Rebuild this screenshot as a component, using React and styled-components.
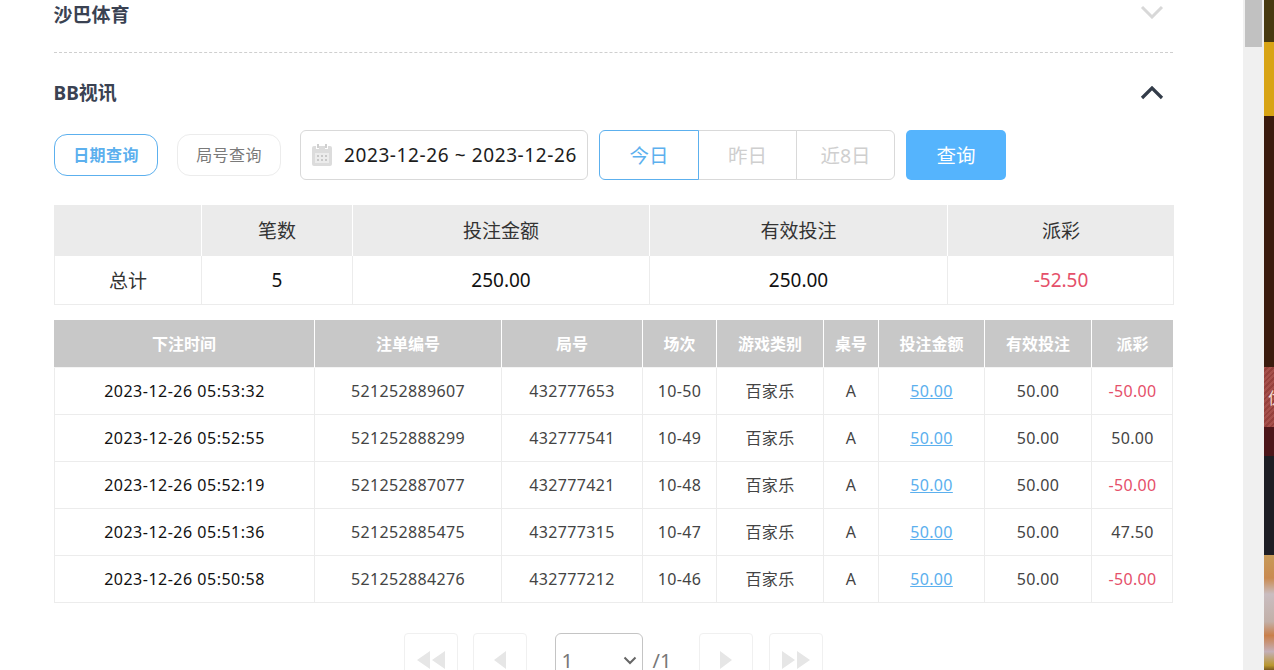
import styled, { createGlobalStyle } from "styled-components";

const GlobalStyle = createGlobalStyle`
  html, body {
    margin: 0;
    height: 100%;
    overflow: hidden;
    background: #fff;
  }
  body {
    font-family: "Noto Sans", "Noto Sans CJK SC", sans-serif;
    color: #303030;
  }
  * {
    box-sizing: border-box;
  }
`;

const summaryCols = "147px 151px 297px 298px 227px";
const detailCols = "260px 187px 141px 74px 107px 55px 106px 107px 82px";

const rows = [
  ["2023-12-26 05:53:32", "521252889607", "432777653", "10-50", "-50.00"],
  ["2023-12-26 05:52:55", "521252888299", "432777541", "10-49", "50.00"],
  ["2023-12-26 05:52:19", "521252887077", "432777421", "10-48", "-50.00"],
  ["2023-12-26 05:51:36", "521252885475", "432777315", "10-47", "47.50"],
  ["2023-12-26 05:50:58", "521252884276", "432777212", "10-46", "-50.00"],
];

const Page = styled.div`
  display: flex;
  width: 1274px;
  height: 670px;
  overflow: hidden;
`;

const Main = styled.main`
  width: 1243px;
  height: 670px;
  padding: 0 70px 0 54px;
  overflow: hidden;
`;

const SectionHead = styled.div`
  display: flex;
  align-items: center;
  justify-content: space-between;
  height: ${(p) => p.$height}px;
  padding-bottom: ${(p) => p.$pb || 0}px;
  border-bottom: ${(p) => (p.$dashed ? "1px dashed #cfcfcf" : "none")};
  margin-bottom: ${(p) => p.$mb || 0}px;
`;

const SectionTitle = styled.h3`
  margin: 0 0 0 -0.5px;
  font-size: 19px;
  font-weight: 700;
  line-height: 28px;
  color: #3a4252;
`;

const Chevron = styled.svg`
  width: 24px;
  height: 14px;
  margin-right: 9px;
  margin-bottom: ${(p) => p.$lift || 0}px;
  fill: none;
  stroke: ${(p) => p.$color};
  stroke-width: ${(p) => p.$weight};
`;

const Toolbar = styled.div`
  display: flex;
  align-items: center;
  height: 50px;
  margin-bottom: 25px;
`;

const Pill = styled.button`
  width: 104px;
  height: 42px;
  margin-right: 19px;
  padding: 0 0 2px;
  font: inherit;
  font-size: 16px;
  letter-spacing: 0.4px;
  font-weight: ${(p) => (p.$active ? 700 : 400)};
  color: ${(p) => (p.$active ? "#5cb0ee" : "#7a7a7a")};
  background: #fff;
  border: 1px solid ${(p) => (p.$active ? "#5cb0ee" : "#ececec")};
  border-radius: 13px;
`;

const DateBox = styled.div`
  display: flex;
  align-items: center;
  width: 288px;
  height: 50px;
  margin-right: 11px;
  padding-left: 10px;
  font-size: 19px;
  letter-spacing: 0.6px;
  color: #1c1c1c;
  white-space: nowrap;
  border: 1px solid #d9d9d9;
  border-radius: 6px;
`;

const CalendarIcon = styled.svg`
  width: 22px;
  height: 24px;
  margin-right: 11px;
  flex: none;
`;

const RangeGroup = styled.div`
  display: flex;
  height: 50px;
  margin-right: 11px;
`;

const RangeButton = styled.button`
  width: ${(p) => (p.$first ? 100 : 99)}px;
  height: 50px;
  padding: 0 0 2px;
  margin-left: ${(p) => (p.$first ? 0 : "-1px")};
  font: inherit;
  font-size: 19.5px;
  color: ${(p) => (p.$active ? "#5cb0ee" : "#cfcfcf")};
  background: #fff;
  border: 1px solid ${(p) => (p.$active ? "#5cb0ee" : "#d9d9d9")};
  border-radius: ${(p) => p.$radius};
  position: relative;
  z-index: ${(p) => (p.$active ? 1 : 0)};
`;

const SearchButton = styled.button`
  width: 100px;
  height: 50px;
  padding: 0 0 2px;
  font: inherit;
  font-size: 19.5px;
  color: #fff;
  background: #55b4fd;
  border: none;
  border-radius: 5px;
`;

const SummaryTable = styled.div`
  display: grid;
  grid-template-columns: ${summaryCols};
  width: 1120px;
  margin-bottom: 15px;
  border-bottom: 1px solid #ececec;
  border-right: 1px solid #ececec;
`;

const SummaryHead = styled.div`
  display: flex;
  align-items: center;
  justify-content: center;
  height: 51px;
  padding-bottom: 1px;
  font-size: 19px;
  color: #333;
  background: #ebebeb;
  border-left: ${(p) => (p.$first ? "none" : "1px solid #fff")};
`;

const SummaryCell = styled.div`
  display: flex;
  align-items: center;
  justify-content: center;
  height: 48px;
  padding-bottom: 1px;
  font-size: 19px;
  color: ${(p) => (p.$loss ? "#e5506a" : p.$label ? "#333" : "#111")};
  border-left: 1px solid #ececec;
`;

const DetailTable = styled.div`
  display: grid;
  grid-template-columns: ${detailCols};
  width: 1119px;
  margin-bottom: 30px;
  border-right: 1px solid #ececec;
`;

const DetailHead = styled.div`
  display: flex;
  align-items: center;
  justify-content: center;
  height: 48px;
  padding-bottom: 1px;
  font-size: 16px;
  font-weight: 700;
  color: #fff;
  background: #c8c8c8;
  border-left: ${(p) => (p.$first ? "none" : "1px solid #fff")};
  border-bottom: 1px solid #f4f4f4;
`;

const DetailCell = styled.div`
  display: flex;
  align-items: center;
  justify-content: center;
  height: 47px;
  padding-bottom: ${(p) => (p.$cjk ? 2 : 0)}px;
  font-size: 16px;
  letter-spacing: ${(p) => (p.$dark ? 0.5 : 0.35)}px;
  color: ${(p) => (p.$loss ? "#e5506a" : p.$dark ? "#111" : "#444")};
  border-left: 1px solid #ececec;
  border-bottom: 1px solid #ececec;
`;

const AmountLink = styled.a`
  color: #5cb0ee;
  text-decoration: underline;
`;

const Pager = styled.div`
  display: flex;
  justify-content: center;
  width: 1120px;
  padding-right: 1px;
`;

const PageButton = styled.div`
  display: flex;
  align-items: center;
  justify-content: center;
  width: 54px;
  height: 54px;
  margin-right: ${(p) => p.$mr}px;
  border: 1px solid #f0f0f0;
  border-radius: 4px;
`;

const PageIcon = styled.svg`
  width: 28px;
  height: 18px;
  fill: #e6e6e6;
`;

const PageSelect = styled.div`
  display: flex;
  align-items: center;
  justify-content: space-between;
  width: 88px;
  height: 54px;
  margin-right: 10px;
  padding: 0 5px 0 6px;
  font-size: 20px;
  color: #777;
  border: 1px solid #c4c4c4;
  border-radius: 6px;
`;

const PageTotal = styled.span`
  display: flex;
  align-items: center;
  height: 54px;
  margin-right: 28px;
  font-size: 20px;
  color: #777;
`;

const ScrollTrack = styled.div`
  width: 21px;
  height: 670px;
  padding: 0 2px;
  background: #f0f0f0;
`;

const ScrollThumb = styled.div`
  height: 47px;
  background: #c1c1c1;
`;

const BackdropStrip = styled.div`
  display: flex;
  flex-direction: column;
  width: 10px;
  height: 670px;
  overflow: hidden;
`;

const StripBand = styled.div`
  flex: none;
  height: ${(p) => p.$h}px;
  background: ${(p) => p.$bg};
`;

const StripLabel = styled(StripBand)`
  display: flex;
  align-items: center;
  padding-left: 4px;
  font-size: 16px;
  color: #f6dcd4;
  white-space: nowrap;
  overflow: hidden;
`;

const Calendar = () => (
  <CalendarIcon viewBox="0 0 22 24">
    <path d="M1 5a2 2 0 0 1 2-2h2v3h3V3h6v3h3V3h2a2 2 0 0 1 2 2v16a2 2 0 0 1-2 2H3a2 2 0 0 1-2-2z" fill="#dcdcdc" />
    <path d="M6 1h2v4H6zM14 1h2v4h-2z" fill="#cfcfcf" />
    <path d="M4 10h14v10H4z" fill="#ececec" />
    <path d="M6 12h2v2H6zM10 12h2v2h-2zM14 12h2v2h-2zM6 16h2v2H6zM10 16h2v2h-2zM14 16h2v2h-2z" fill="#c8c8c8" />
  </CalendarIcon>
);

export default function App() {
  return (
    <Page>
      <GlobalStyle />
      <Main>
        <SectionHead $height={53} $pb={23} $dashed $mb={25}>
          <SectionTitle>沙巴体育</SectionTitle>
          <Chevron $color="#d8d8d8" $weight={3} $lift={6} viewBox="0 0 24 14">
            <path d="M2 2l10 10L22 2" />
          </Chevron>
        </SectionHead>
        <SectionHead $height={30} $mb={22}>
          <SectionTitle>BB视讯</SectionTitle>
          <Chevron $color="#333c49" $weight={3.2} viewBox="0 0 24 14">
            <path d="M2 12L12 2l10 10" />
          </Chevron>
        </SectionHead>
        <Toolbar>
          <Pill $active>日期查询</Pill>
          <Pill>局号查询</Pill>
          <DateBox>
            <Calendar />
            2023-12-26 ~ 2023-12-26
          </DateBox>
          <RangeGroup>
            <RangeButton $first $active $radius="6px 0 0 6px">今日</RangeButton>
            <RangeButton $radius="0">昨日</RangeButton>
            <RangeButton $radius="0 6px 6px 0">近8日</RangeButton>
          </RangeGroup>
          <SearchButton>查询</SearchButton>
        </Toolbar>
        <SummaryTable>
          <SummaryHead $first />
          <SummaryHead>笔数</SummaryHead>
          <SummaryHead>投注金额</SummaryHead>
          <SummaryHead>有效投注</SummaryHead>
          <SummaryHead>派彩</SummaryHead>
          <SummaryCell $label>总计</SummaryCell>
          <SummaryCell>5</SummaryCell>
          <SummaryCell>250.00</SummaryCell>
          <SummaryCell>250.00</SummaryCell>
          <SummaryCell $loss>-52.50</SummaryCell>
        </SummaryTable>
        <DetailTable>
          {["下注时间", "注单编号", "局号", "场次", "游戏类别", "桌号", "投注金额", "有效投注", "派彩"].map((h, i) => (
            <DetailHead key={h} $first={i === 0}>{h}</DetailHead>
          ))}
          {rows.map((r) => (
            <div key={r[1]} style={{ display: "contents" }}>
              <DetailCell $dark>{r[0]}</DetailCell>
              <DetailCell>{r[1]}</DetailCell>
              <DetailCell>{r[2]}</DetailCell>
              <DetailCell>{r[3]}</DetailCell>
              <DetailCell $cjk>百家乐</DetailCell>
              <DetailCell>A</DetailCell>
              <DetailCell><AmountLink>50.00</AmountLink></DetailCell>
              <DetailCell>50.00</DetailCell>
              <DetailCell $loss={r[4].startsWith("-")}>{r[4]}</DetailCell>
            </div>
          ))}
        </DetailTable>
        <Pager>
          <PageButton $mr={15}>
            <PageIcon viewBox="0 0 28 18"><path d="M13 0v18L0 9zM28 0v18L15 9z" /></PageIcon>
          </PageButton>
          <PageButton $mr={28}>
            <PageIcon viewBox="0 0 28 18"><path d="M20 0v18L8 9z" /></PageIcon>
          </PageButton>
          <PageSelect>
            1
            <svg width="14" height="9" viewBox="0 0 14 9" fill="none" stroke="#666" strokeWidth="2"><path d="M1.5 1.5L7 7l5.5-5.5" /></svg>
          </PageSelect>
          <PageTotal>/1</PageTotal>
          <PageButton $mr={16}>
            <PageIcon viewBox="0 0 28 18"><path d="M8 0v18l12-9z" /></PageIcon>
          </PageButton>
          <PageButton $mr={0}>
            <PageIcon viewBox="0 0 28 18"><path d="M0 0v18l13-9zM15 0v18l13-9z" /></PageIcon>
          </PageButton>
        </Pager>
      </Main>
      <ScrollTrack>
        <ScrollThumb />
      </ScrollTrack>
      <BackdropStrip>
        <StripBand $h={42} $bg="#47390f" />
        <StripBand $h={74} $bg="#d8a414" />
        <StripBand $h={251} $bg="#3b1b0e" />
        <StripLabel $h={60} $bg="repeating-linear-gradient(135deg, #a5504b 0 2px, #95403c 2px 4px)">优惠</StripLabel>
        <StripBand $h={29} $bg="#4c161a" />
        <StripBand $h={99} $bg="#1d1e24" />
        <StripBand $h={115} $bg="linear-gradient(180deg, #c79a58 0%, #c98a50 20%, #c9bdc0 34%, #c2b0a8 58%, #c97f4a 70%, #c4b0b8 84%, #b8962e 96%, #7a5a20 100%)" />
      </BackdropStrip>
    </Page>
  );
}
